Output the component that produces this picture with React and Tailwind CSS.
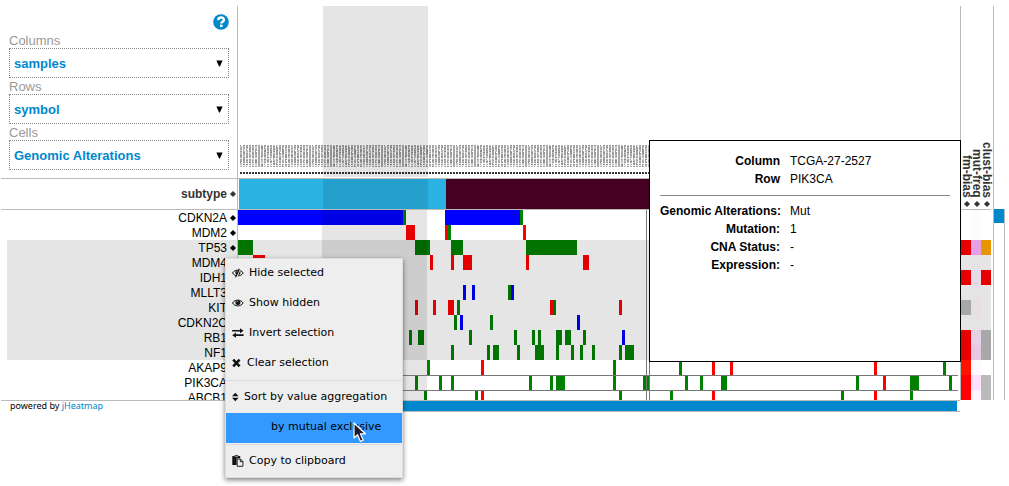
import React from "react";

const RED = "#ff0000";
const GREEN = "#008000";
const BLUE = "#0000ff";
const CELL = 3;
const ROW = 15;

// Each run is [first column, column count, colour].
const ROWS = [
  { name: "CDKN2A", runs: [[0, 55, BLUE], [55, 1, GREEN], [69, 25, BLUE], [94, 1, GREEN]] },
  { name: "MDM2", runs: [[56, 3, RED], [69, 1, RED], [70, 1, GREEN], [95, 1, RED]] },
  { name: "TP53", selected: true, runs: [[0, 5, GREEN], [59, 5, GREEN], [71, 4, GREEN], [96, 17, GREEN]] },
  { name: "MDM4", selected: true, runs: [[5, 4, RED], [64, 1, RED], [71, 1, RED], [75, 3, RED], [96, 1, RED], [115, 2, RED]] },
  { name: "IDH1", selected: true, runs: [] },
  { name: "MLLT3", selected: true, runs: [[75, 1, BLUE], [78, 1, BLUE], [90, 1, GREEN], [91, 1, BLUE]] },
  { name: "KIT", selected: true, runs: [[59, 1, RED], [65, 1, RED], [70, 2, RED], [73, 1, GREEN], [104, 1, RED], [105, 1, GREEN], [127, 1, RED]] },
  { name: "CDKN2C", selected: true, runs: [[72, 1, GREEN], [74, 1, BLUE], [84, 1, GREEN], [113, 1, BLUE]] },
  { name: "RB1", selected: true, runs: [[57, 1, GREEN], [60, 2, GREEN], [77, 1, GREEN], [92, 1, GREEN], [98, 1, GREEN], [100, 1, GREEN], [106, 2, GREEN], [109, 2, GREEN], [115, 1, GREEN], [128, 1, BLUE]] },
  { name: "NF1", selected: true, runs: [[71, 1, GREEN], [83, 1, GREEN], [85, 2, GREEN], [93, 1, GREEN], [99, 3, GREEN], [106, 1, GREEN], [111, 1, GREEN], [114, 1, GREEN], [118, 1, GREEN], [127, 1, GREEN], [129, 3, GREEN]] },
  { name: "AKAP9", runs: [[63, 1, GREEN], [81, 1, RED], [125, 1, GREEN], [147, 1, GREEN], [158, 1, RED], [164, 1, RED], [212, 1, RED], [235, 1, GREEN]] },
  { name: "PIK3CA", runs: [[59, 1, GREEN], [67, 1, GREEN], [71, 1, GREEN], [97, 1, GREEN], [104, 1, GREEN], [106, 3, GREEN], [125, 1, GREEN], [135, 2, GREEN], [149, 1, GREEN], [154, 1, GREEN], [161, 2, GREEN], [206, 1, GREEN], [215, 1, RED], [224, 3, GREEN], [237, 1, GREEN]] },
  { name: "ABCB1", runs: [[62, 1, GREEN], [79, 1, GREEN], [81, 1, RED], [127, 1, GREEN], [144, 1, GREEN], [158, 1, RED], [201, 1, GREEN], [212, 1, RED], [224, 1, GREEN]] },
];

const ANNOTATIONS = [
  ["#ffffff", "#fffcff", "#ffffff"],
  ["#ffffff", "#fffcff", "#ffffff"],
  ["#e60000", "#e6a0e6", "#e69600"],
  ["#e5e5e5", "#e6e2e6", "#e5e5e5"],
  ["#e60000", "#e6d9e6", "#e60000"],
  ["#e5e5e5", "#e6e2e6", "#e5e5e5"],
  ["#a8a8a8", "#e6e0e6", "#e5e5e5"],
  ["#e5e5e5", "#e6e2e6", "#e5e5e5"],
  ["#e60000", "#e6d2e6", "#a8a8a8"],
  ["#e60000", "#e6c8e6", "#a8a8a8"],
  ["#ff1400", "#fffaff", "#ffffff"],
  ["#ff0000", "#ffe0ff", "#bababa"],
  ["#ff0000", "#fff5ff", "#bababa"],
];

const GREYS = ["#999999", "#a8a8a8", "#b4b4b4", "#8f8f8f", "#c4c4c4", "#a0a0a0"];
const PALE_LINES = [9, 13, 18, 20];

function Diamond({ color = "#000000" }) {
  return (
    <svg width="6" height="6" viewBox="0 0 6 6" className="block shrink-0" aria-hidden="true">
      <path d="M3 0.2 L5.8 3 L3 5.8 L0.2 3 Z" fill={color} stroke={color} strokeWidth="0.4" />
    </svg>
  );
}

function Field({ id, label, options }) {
  return (
    <div>
      <label htmlFor={id} className="block h-4 text-[13px] leading-[18px] text-[#999999]">
        {label}
      </label>
      <div className="relative">
        <select
          id={id}
          className="block h-[30px] w-full appearance-none border border-dotted border-[#888888] bg-white pl-1 pt-[2px] text-[13px] font-bold text-[#0088cc]"
        >
          {options.map((o) => (
            <option key={o}>{o}</option>
          ))}
        </select>
        <svg width="7" height="7" viewBox="0 0 7 7" className="pointer-events-none absolute right-[6px] top-3" aria-hidden="true">
          <path d="M0.4 0.4 H6.6 L3.9 6.6 H3.1 Z" fill="#000000" />
        </svg>
      </div>
    </div>
  );
}

function HeaderCanvas() {
  const marks = [];
  for (let c = 0; c < 24; c++) {
    for (let r = 0; r < 22; r++) {
      const n = (c * 37 + r * 53 + c * r * 11) % 17;
      const pale = PALE_LINES.includes(r) && n > 4;
      marks.push(
        <rect key={c + "-" + r} x={c * CELL} y={r} width={n === 0 ? 1 : 2} height="1" fill={pale ? "#e6e6e6" : GREYS[n % 6]} />
      );
    }
  }
  return (
    <svg width="722" height="172" className="block" role="img" aria-label="Sample identifiers">
      <defs>
        <pattern id="ids" x="2" y="139" width="72" height="23" patternUnits="userSpaceOnUse">
          {marks}
        </pattern>
        <pattern id="dots" x="2" y="166" width="3" height="3" patternUnits="userSpaceOnUse">
          <rect width="2" height="2" fill="#333333" />
        </pattern>
      </defs>
      <rect x="2" y="139" width="718" height="22" fill="url(#ids)" />
      <rect x="2" y="166" width="718" height="2" fill="url(#dots)" />
      <rect x="85" y="0" width="105" height="171" fill="#000000" fillOpacity="0.1" />
    </svg>
  );
}

function HeatmapCanvas() {
  return (
    <svg width="722" height="190" className="block" role="img" aria-label="Genomic alterations heatmap" shapeRendering="crispEdges">
      {ROWS.map((row, i) =>
        row.runs.map(([start, count, color]) => (
          <rect key={row.name + start} x={start * CELL} y={i * ROW} width={count * CELL} height={ROW} fill={color} />
        ))
      )}
      <rect x="0" y="30" width="722" height="120" fillOpacity="0.1" />
      <rect x="84" y="0" width="105" height="190" fillOpacity="0.1" />
      <g fill="#777777">
        <rect x="0" y="165" width="720" height="1" />
        <rect x="0" y="180" width="720" height="1" />
        <rect x="408" y="0" width="1" height="190" />
        <rect x="411" y="0" width="1" height="190" />
      </g>
    </svg>
  );
}

function AnnotationCanvas() {
  return (
    <svg width="30" height="190" className="block" role="img" aria-label="Row annotations" shapeRendering="crispEdges">
      {ANNOTATIONS.map((colors, i) =>
        colors.map((c, j) => <rect key={i + "-" + j} x={j * 10} y={i * ROW} width="10" height={ROW} fill={c} />)
      )}
    </svg>
  );
}

function EyeIcon({ slashed }) {
  return (
    <svg width="12" height="10" viewBox="0 0 12 10" className="shrink-0" aria-hidden="true">
      <path d="M0.5 5 C2.8 1.2 8.8 1.2 11.2 5 C8.8 8.8 2.8 8.8 0.5 5 Z" fill="none" stroke="#111111" strokeWidth="1" />
      <circle cx="5.9" cy="4.6" r="2.5" fill="#111111" />
      <path d="M4.6 4.3 C4.7 3.6 5.2 3.1 5.9 3" fill="none" stroke="#eeeeee" strokeWidth="0.7" />
      {slashed && (
        <>
          <path d="M8.2 0.8 L4.5 9.4" stroke="#eeeeee" strokeWidth="1.2" />
          <path d="M7.4 0.8 L3.6 9.4" stroke="#111111" strokeWidth="1.1" />
        </>
      )}
    </svg>
  );
}

function ExchangeIcon() {
  return (
    <svg width="12" height="10" viewBox="0 0 12 10" className="shrink-0" aria-hidden="true">
      <path d="M0.2 2 H8 V0.2 L11.6 2.8 L8 5.2 V3.6 H0.2 Z M11.6 6.2 H4 V4.6 L0.2 7.2 L4 9.8 V7.9 H11.6 Z" fill="#111111" />
    </svg>
  );
}

function ClearIcon() {
  return (
    <svg width="10" height="10" viewBox="0 0 10 10" className="shrink-0" aria-hidden="true">
      <path d="M1.2 1.7 L7.6 8.3 M7.6 1.7 L1.2 8.3" stroke="#111111" strokeWidth="2.6" />
    </svg>
  );
}

function SortIcon() {
  return (
    <svg width="7" height="10" viewBox="0 0 7 10" className="shrink-0" aria-hidden="true">
      <path d="M3.3 0.8 L6.6 4.3 H0 Z M0 5.7 H6.6 L3.3 9.2 Z" fill="#111111" />
    </svg>
  );
}

function PasteIcon() {
  return (
    <svg width="12" height="12" viewBox="0 0 12 12" className="shrink-0" aria-hidden="true">
      <path d="M0.3 1 H2.6 V0.3 H6.2 V1 H8.2 V3.2 H4.6 V10 H0.3 Z" fill="#111111" />
      <path d="M2.6 1.6 H6.2" stroke="#eeeeee" strokeWidth="0.6" />
      <path d="M5.2 4 H8.4 L10.9 6.5 V11.3 H5.2 Z" fill="#eeeeee" stroke="#111111" strokeWidth="0.9" />
      <path d="M8.3 4 V6.7 H10.9" fill="none" stroke="#111111" strokeWidth="0.9" />
    </svg>
  );
}

function MenuItem({ icon, children, active }) {
  return (
    <button
      type="button"
      role="menuitem"
      className={
        "flex h-[30px] w-full items-center gap-[5px] pb-[2px] text-left " +
        (active ? "bg-[#3399ff] pl-[45px]" : "pl-[6px]")
      }
    >
      {icon}
      <span>{children}</span>
    </button>
  );
}

function Separator() {
  return (
    <div role="separator" className="h-1 pt-px">
      <div className="h-px bg-[#dcdcdc]" />
    </div>
  );
}

function ContextMenu() {
  return (
    <div
      role="menu"
      className="absolute left-[225px] top-[258px] w-[178px] border border-[#dddddd] bg-[#eeeeee] font-['DejaVu_Sans',sans-serif] text-[11px] leading-4 text-black shadow-[0_2px_5px_rgba(0,0,0,0.5)]"
    >
      <MenuItem icon={<EyeIcon slashed />}>Hide selected</MenuItem>
      <MenuItem icon={<EyeIcon />}>Show hidden</MenuItem>
      <MenuItem icon={<ExchangeIcon />}>Invert selection</MenuItem>
      <MenuItem icon={<ClearIcon />}>Clear selection</MenuItem>
      <Separator />
      <MenuItem icon={<SortIcon />}>Sort by value aggregation</MenuItem>
      <MenuItem active>by mutual exclusive</MenuItem>
      <Separator />
      <MenuItem icon={<PasteIcon />}>Copy to clipboard</MenuItem>
    </div>
  );
}

function DetailRows({ rows }) {
  return (
    <dl className="grid grid-cols-[120px_1fr] gap-x-[10px] leading-[18px]">
      {rows.map(([k, v]) => (
        <React.Fragment key={k}>
          <dt className="whitespace-nowrap text-right font-bold">{k}</dt>
          <dd>{v}</dd>
        </React.Fragment>
      ))}
    </dl>
  );
}

function CellTooltip() {
  return (
    <div role="tooltip" className="absolute left-[649px] top-[140px] h-[222px] w-[312px] border border-black bg-white px-[10px] pt-[11px] text-[12px] text-black">
      <DetailRows rows={[["Column", "TCGA-27-2527"], ["Row", "PIK3CA"]]} />
      <hr className="mb-[6px] mt-[7px] border-t border-[#888888]" />
      <DetailRows
        rows={[
          ["Genomic Alterations:", "Mut"],
          ["Mutation:", "1"],
          ["CNA Status:", "-"],
          ["Expression:", "-"],
        ]}
      />
    </div>
  );
}

function Cursor() {
  return (
    <svg width="14" height="21" viewBox="0 0 14 21" className="pointer-events-none absolute left-[353px] top-[422px]" aria-hidden="true">
      <path d="M1 1 V16 L4.6 12.8 L7.4 19.4 L10.2 18.2 L7.4 11.8 H12.4 Z" fill="#1c1c2e" stroke="#ffffff" strokeWidth="1.2" strokeLinejoin="round" />
    </svg>
  );
}

export default function App() {
  return (
    <main className="relative min-h-screen bg-white pl-px pr-1 pt-[6px] font-['Liberation_Sans',Arial,sans-serif] text-[12px] text-black">
      <div className="grid grid-cols-[236px_minmax(0,1fr)_33px_12px] grid-rows-[172px_31px_191px_12px]">
        <section className="pl-2 pr-2 pt-2">
          <div className="mb-[2px] flex justify-end">
            <button type="button" aria-label="Help" className="block size-4">
              <svg width="16" height="16" viewBox="0 0 16 16" aria-hidden="true">
                <circle cx="8" cy="8" r="7.8" fill="#0088cc" />
                <path d="M5.2 6.1 C5.3 4.4 6.4 3.5 8.1 3.5 C9.8 3.5 10.9 4.5 10.9 5.9 C10.9 7.7 8.3 7.7 8.3 9.6" fill="none" stroke="#ffffff" strokeWidth="2.4" />
                <rect x="7" y="10.6" width="2.5" height="2.4" fill="#ffffff" />
              </svg>
            </button>
          </div>
          <Field id="columns" label="Columns" options={["samples", "subtype"]} />
          <Field id="rows" label="Rows" options={["symbol"]} />
          <Field id="cells" label="Cells" options={["Genomic Alterations", "Mutation", "CNA Status", "Expression"]} />
        </section>
        <div className="overflow-hidden border-l border-[#bababa]">
          <HeaderCanvas />
        </div>
        <div className="row-span-2 flex items-end border-l border-[#bababa] pb-[2px] pl-px font-bold text-[#333333]">
          {["fm-bias", "mut-freq", "clust-bias"].map((t) => (
            <div key={t} className="flex w-[10px] flex-col items-center gap-[3px]">
              <span className="leading-[10px] [writing-mode:vertical-rl]">{t}</span>
              <Diamond color="#333333" />
            </div>
          ))}
        </div>
        <div className="row-span-2 border-l border-[#bababa]" />

        <div className="flex items-center justify-end gap-[3px] border-t border-[#bababa] pr-px font-bold text-[#333333]">
          <span>subtype</span>
          <Diamond color="#333333" />
        </div>
        <div className="overflow-hidden border-l border-t border-[#bababa]">
          <svg width="722" height="30" className="block" role="img" aria-label="subtype">
            <rect x="1" width="207" height="30" fill="#2ab2e2" />
            <rect x="208" width="513" height="30" fill="#450022" />
            <rect x="85" width="105" height="30" fillOpacity="0.1" />
          </svg>
        </div>

        <ul className="overflow-hidden border-t border-[#bababa]">
          {ROWS.map((r) => (
            <li key={r.name} className={"ml-[6px] flex h-[15px] items-center justify-end gap-[3px] pr-px pt-px leading-[15px] " + (r.selected ? "bg-[#e5e5e5]" : "")}>
              <span>{r.name}</span>
              <Diamond />
            </li>
          ))}
        </ul>
        <div className="overflow-hidden border-l border-t border-[#bababa]">
          <HeatmapCanvas />
        </div>
        <div className="overflow-hidden border-l border-[#bababa]">
          <div className="w-[30px] border-t border-[#bababa]">
            <AnnotationCanvas />
          </div>
        </div>
        <div className="border-x border-[#bababa]">
          <div className="h-[14px] bg-[#0088cc]" />
        </div>

        <footer className="border-t border-[#bababa] pl-[9px] font-['Noto_Sans',sans-serif] text-[9px] leading-[10px]">
          powered by{" "}
          <a href="#jheatmap" className="text-[#0088cc]">
            jHeatmap
          </a>
        </footer>
        <div className="border-y border-[#bababa] pr-[3px]">
          <div className="h-[10px] bg-[#0088cc]" />
        </div>
      </div>

      <CellTooltip />
      <ContextMenu />
      <Cursor />
    </main>
  );
}
